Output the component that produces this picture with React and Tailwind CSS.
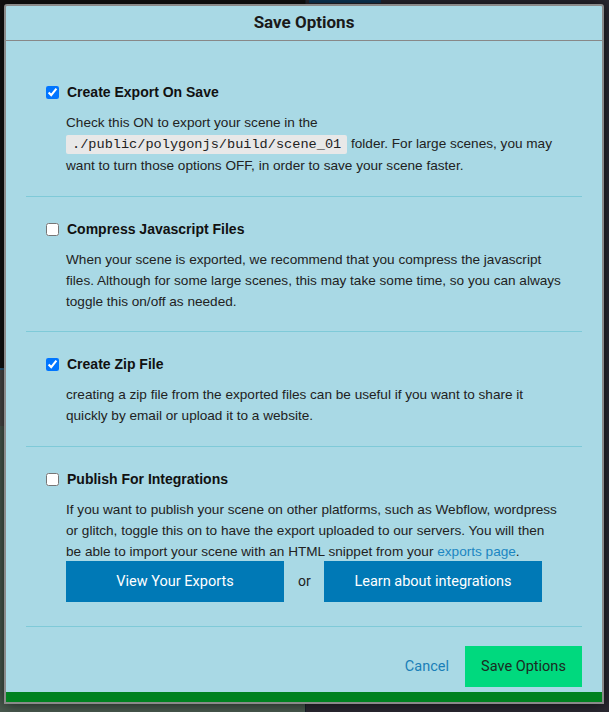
import React from "react";

const sans = { fontFamily: '"Liberation Sans", Arial, sans-serif' };

function Section({ checked, title, children, extra, pb = "pb-[20px]" }) {
  return (
    <div className={`border-b border-[#7fcad8] px-[20px] pt-[24px] ${pb}`}>
      <label className="flex h-4 items-center gap-[8px]">
        <input type="checkbox" defaultChecked={checked} className="h-[13px] w-[13px]" />
        <span className="text-[14px] font-bold leading-4 text-[#111]">{title}</span>
      </label>
      <div className="mt-[12px] pl-[20px] text-[13.6px] leading-[21px] text-[#222]">{children}</div>
      {extra}
    </div>
  );
}

export default function App() {
  return (
    <div className="relative h-[712px] w-[609px] overflow-hidden" style={sans}>
      {/* page behind the modal */}
      <div className="flex h-full w-full">
        <div className="flex w-[305px] flex-col">
          <div className="h-[368px] bg-[#121212]" />
          <div className="h-[2px] bg-[#2d5f80]" />
          <div className="h-[56px] bg-[#4a4a48]" />
          <div className="flex-1 bg-[#4a5b50]" />
        </div>
        <div className="w-[1px] bg-[#15202a]" />
        <div className="flex flex-1 flex-col bg-[#2a2831]">
          <div className="ml-[3px] h-[3px] w-[72px] bg-[#0d3a5c]" />
        </div>
      </div>

      {/* modal */}
      <div className="absolute left-[4px] top-[4px] flex w-[600px] flex-col rounded-t-[3px] border-2 border-[#8a8a8a] bg-[#a9d9e5] shadow-[0_0_14px_rgba(0,0,0,0.7)]">
        <div className="flex h-[35px] items-center justify-center border-b border-[#888]">
          <h1 className="text-[17px] font-bold text-[#1a1a1a]" style={{ fontFamily: "Roboto, sans-serif" }}>
            Save Options
          </h1>
        </div>

        <div className="px-[20px] pt-[19px]">
          <Section checked title="Create Export On Save" pb="pb-[20px]">
            Check this ON to export your scene in the{" "}
            <code
              className="rounded-[2px] bg-[#e8e8e8] px-[6px] py-[2px] text-[13.6px] text-[#222]"
              style={{ fontFamily: '"Liberation Mono", "Courier New", monospace' }}
            >
              ./public/polygonjs/build/scene_01
            </code>{" "}
            folder. For large scenes, you may want to turn those options OFF, in order to save your scene faster.
          </Section>

          <Section checked={false} title="Compress Javascript Files" pb="pb-[19px]">
            When your scene is exported, we recommend that you compress the javascript files. Although for some large
            scenes, this may take some time, so you can always toggle this on/off as needed.
          </Section>

          <Section checked title="Create Zip File">
            creating a zip file from the exported files can be useful if you want to share it quickly by email or
            upload it to a website.
          </Section>

          <Section
            checked={false}
            title="Publish For Integrations"
            pb="pb-[24px]"
            extra={
              <div
                className="-mt-[1px] flex items-center gap-[14px] pl-[20px]"
                style={{ fontFamily: "Roboto, sans-serif" }}
              >
                <button className="h-[41px] w-[218px] bg-[#0079b6] text-[14.5px] text-white">View Your Exports</button>
                <span className="w-[12px] text-center text-[14px] text-[#222]">or</span>
                <button className="h-[41px] w-[218px] bg-[#0079b6] text-[14.5px] text-white">
                  Learn about integrations
                </button>
              </div>
            }
          >
            If you want to publish your scene on other platforms, such as Webflow, wordpress or glitch, toggle this on
            to have the export uploaded to our servers. You will then be able to import your scene with an HTML snippet
            from your <a className="text-[#1b86c2]">exports page</a>.
          </Section>
        </div>

        <div
          className="flex items-center justify-end gap-[16px] px-[20px] pt-[19px]"
          style={{ fontFamily: "Roboto, sans-serif" }}
        >
          <button className="text-[14.5px] text-[#1a7fb8]">Cancel</button>
          <button className="h-[41px] w-[117px] bg-[#00d97e] text-[14.5px] text-[#1b2b22]">Save Options</button>
        </div>
        <div className="mt-[5px] h-[10px] bg-[#008120]" />
      </div>
    </div>
  );
}
